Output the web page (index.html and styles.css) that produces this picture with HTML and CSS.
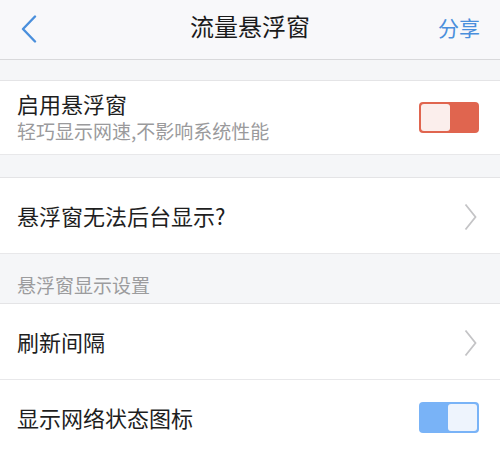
FILE: index.html
```html
<!DOCTYPE html>
<html lang="zh-CN">
<head>
    <title>流量悬浮窗</title>
    <meta charset="UTF-8">
    <link rel="stylesheet" href="styles.css">
</head>
<body>
    <div class="navbar">
        <div class="back">
            <svg width="16" height="28" viewBox="0 0 16 28"><path d="M14 1.5 L2 14 L14 26.5" fill="none" stroke="#4a8fdc" stroke-width="2.4" stroke-linecap="round" stroke-linejoin="round"/></svg>
        </div>
        <div class="title">流量悬浮窗</div>
        <div class="share">分享</div>
    </div>

    <div class="spacer first"></div>
    <div class="row tall">
        <div class="text">
            <div class="label">启用悬浮窗</div>
            <div class="sub">轻巧显示网速,不影响系统性能</div>
        </div>
        <div class="switch red"><span class="knob"></span><span class="fill"></span></div>
    </div>

    <div class="spacer"></div>
    <div class="row">
        <div class="label">悬浮窗无法后台显示?</div>
        <svg class="arrow" width="13" height="28" viewBox="0 0 13 28"><path d="M1.5 1.5 L11.5 14 L1.5 26.5" fill="none" stroke="#c4c4c6" stroke-width="1.8"/></svg>
    </div>

    <div class="section">悬浮窗显示设置</div>
    <div class="row">
        <div class="label">刷新间隔</div>
        <svg class="arrow" width="13" height="28" viewBox="0 0 13 28"><path d="M1.5 1.5 L11.5 14 L1.5 26.5" fill="none" stroke="#c4c4c6" stroke-width="1.8"/></svg>
    </div>
    <div class="row">
        <div class="label">显示网络状态图标</div>
        <div class="switch blue"><span class="fill"></span><span class="knob"></span></div>
    </div>
</body>
</html>
```

FILE: styles.css
```css
body {
    margin: 0;
    background: #f5f6f8;
    font-family: "Noto Sans CJK SC", "Noto Sans", sans-serif;
    color: #1e1e1e;
}

.navbar {
    height: 60px;
    box-sizing: border-box;
    background: #f8f8fa;
    border-bottom: 1px solid #d9d9db;
    display: flex;
    align-items: center;
    justify-content: space-between;
    padding: 0 20px 5px 21px;
    position: relative;
}

.back {
    width: 16px;
    height: 28px;
    margin-top: 3px;
}

.title {
    font-size: 24px;
    line-height: 32px;
    color: #1a1a1a;
    position: absolute;
    left: 0;
    right: 0;
    top: 10px;
    text-align: center;
    pointer-events: none;
}

.share {
    font-size: 21px;
    color: #4a8fdc;
}

.spacer {
    height: 22px;
    border-bottom: 1px solid #e4e4e6;
}

.spacer.first {
    height: 20px;
}

.row {
    background: #fff;
    height: 76px;
    box-sizing: border-box;
    border-bottom: 1px solid #e8e8ea;
    display: flex;
    align-items: center;
    justify-content: space-between;
    padding: 0 21px 2px 17px;
}

.row.tall {
    height: 74px;
    padding-bottom: 2px;
}

.label {
    font-size: 22px;
    line-height: 28px;
}

.sub {
    font-size: 19px;
    line-height: 28px;
    color: #9a9a9c;
}

.arrow {
    margin-right: 2px;
    margin-top: 4px;
}

.switch {
    width: 60px;
    height: 31px;
    box-sizing: border-box;
    border-radius: 4px;
    padding: 2px;
    display: flex;
    margin-top: 2px;
}

.section {
    height: 50px;
    box-sizing: border-box;
    line-height: 62px;
    padding-left: 17px;
    font-size: 19px;
    color: #9c9c9e;
    border-bottom: 1px solid #e4e4e6;
}

.switch .knob {
    width: 29px;
    height: 27px;
    border-radius: 3px;
}

.switch .fill {
    flex: 1;
}

.switch.red {
    background: #e0654f;
}

.switch.red .knob {
    background: #fbeeec;
}

.switch.blue {
    background: #79b3f7;
}

.switch.blue .knob {
    background: #eef4fd;
}
```
